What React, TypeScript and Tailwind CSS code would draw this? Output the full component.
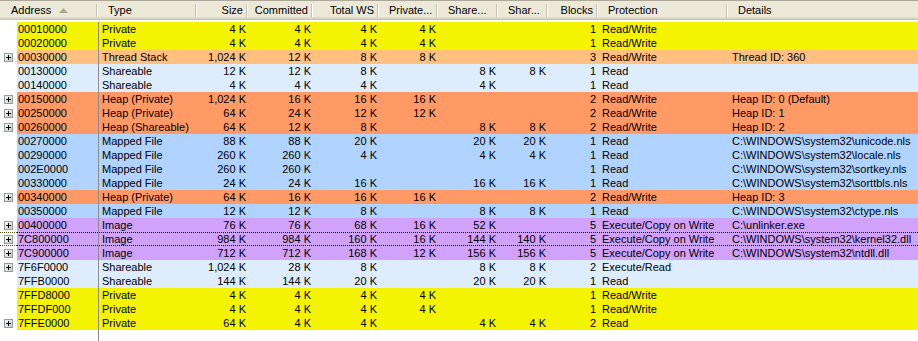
import React from "react";

type Kind = "private" | "thread" | "share" | "heap" | "mapped" | "image";

const rowBg: Record<Kind, string> = {
  private: "bg-[#f4f400]",
  thread: "bg-[#ffc080]",
  share: "bg-[#ddedfd]",
  heap: "bg-[#ff9a66]",
  mapped: "bg-[#b0d4ff]",
  image: "bg-[#d0a2fa]",
};

type Col = { label: string; w: string; right?: boolean; headLeft?: boolean };

const cols: Col[] = [
  { label: "Type", w: "w-[99px]" },
  { label: "Size", w: "w-[51px]", right: true },
  { label: "Committed", w: "w-[65px]", right: true },
  { label: "Total WS", w: "w-[66px]", right: true },
  { label: "Private...", w: "w-[59px]", right: true, headLeft: true },
  { label: "Share...", w: "w-[60px]", right: true, headLeft: true },
  { label: "Shar...", w: "w-[50px]", right: true, headLeft: true },
  { label: "Blocks", w: "w-[50px]", right: true },
  { label: "Protection", w: "w-[130px]" },
  { label: "Details", w: "flex-1" },
];

// address, expandable, kind, then the ten columns
type Row = [string, boolean, Kind, string[]];

const rows: Row[] = [
  ["00010000", false, "private", ["Private", "4 K", "4 K", "4 K", "4 K", "", "", "1", "Read/Write", ""]],
  ["00020000", false, "private", ["Private", "4 K", "4 K", "4 K", "4 K", "", "", "1", "Read/Write", ""]],
  ["00030000", true, "thread", ["Thread Stack", "1,024 K", "12 K", "8 K", "8 K", "", "", "3", "Read/Write", "Thread ID: 360"]],
  ["00130000", false, "share", ["Shareable", "12 K", "12 K", "8 K", "", "8 K", "8 K", "1", "Read", ""]],
  ["00140000", false, "share", ["Shareable", "4 K", "4 K", "4 K", "", "4 K", "", "1", "Read", ""]],
  ["00150000", true, "heap", ["Heap (Private)", "1,024 K", "16 K", "16 K", "16 K", "", "", "2", "Read/Write", "Heap ID: 0 (Default)"]],
  ["00250000", true, "heap", ["Heap (Private)", "64 K", "24 K", "12 K", "12 K", "", "", "2", "Read/Write", "Heap ID: 1"]],
  ["00260000", true, "heap", ["Heap (Shareable)", "64 K", "12 K", "8 K", "", "8 K", "8 K", "2", "Read/Write", "Heap ID: 2"]],
  ["00270000", false, "mapped", ["Mapped File", "88 K", "88 K", "20 K", "", "20 K", "20 K", "1", "Read", "C:\\WINDOWS\\system32\\unicode.nls"]],
  ["00290000", false, "mapped", ["Mapped File", "260 K", "260 K", "4 K", "", "4 K", "4 K", "1", "Read", "C:\\WINDOWS\\system32\\locale.nls"]],
  ["002E0000", false, "mapped", ["Mapped File", "260 K", "260 K", "", "", "", "", "1", "Read", "C:\\WINDOWS\\system32\\sortkey.nls"]],
  ["00330000", false, "mapped", ["Mapped File", "24 K", "24 K", "16 K", "", "16 K", "16 K", "1", "Read", "C:\\WINDOWS\\system32\\sorttbls.nls"]],
  ["00340000", true, "heap", ["Heap (Private)", "64 K", "16 K", "16 K", "16 K", "", "", "2", "Read/Write", "Heap ID: 3"]],
  ["00350000", false, "mapped", ["Mapped File", "12 K", "12 K", "8 K", "", "8 K", "8 K", "1", "Read", "C:\\WINDOWS\\system32\\ctype.nls"]],
  ["00400000", true, "image", ["Image", "76 K", "76 K", "68 K", "16 K", "52 K", "", "5", "Execute/Copy on Write", "C:\\unlinker.exe"]],
  ["7C800000", true, "image", ["Image", "984 K", "984 K", "160 K", "16 K", "144 K", "140 K", "5", "Execute/Copy on Write", "C:\\WINDOWS\\system32\\kernel32.dll"]],
  ["7C900000", true, "image", ["Image", "712 K", "712 K", "168 K", "12 K", "156 K", "156 K", "5", "Execute/Copy on Write", "C:\\WINDOWS\\system32\\ntdll.dll"]],
  ["7F6F0000", true, "share", ["Shareable", "1,024 K", "28 K", "8 K", "", "8 K", "8 K", "2", "Execute/Read", ""]],
  ["7FFB0000", false, "share", ["Shareable", "144 K", "144 K", "20 K", "", "20 K", "20 K", "1", "Read", ""]],
  ["7FFD8000", false, "private", ["Private", "4 K", "4 K", "4 K", "4 K", "", "", "1", "Read/Write", ""]],
  ["7FFDF000", false, "private", ["Private", "4 K", "4 K", "4 K", "4 K", "", "", "1", "Read/Write", ""]],
  ["7FFE0000", true, "private", ["Private", "64 K", "4 K", "4 K", "", "4 K", "4 K", "2", "Read", ""]],
];

const FOCUSED = "7C800000";

const PlusBox = () => (
  <svg width="9" height="9" viewBox="0 0 9 9">
    <defs>
      <linearGradient id="plusFill" x1="0" y1="0" x2="1" y2="1">
        <stop offset="0" stopColor="#ffffff" />
        <stop offset="1" stopColor="#c9c6b8" />
      </linearGradient>
    </defs>
    <rect x="0.5" y="0.5" width="8" height="8" fill="url(#plusFill)" stroke="#8e9aa6" />
    <path d="M2 4.5h5M4.5 2v5" stroke="#000" strokeWidth="1" />
  </svg>
);

const HeaderSep = () => (
  <span className="h-[13px] w-[2px] shrink-0 border-l border-[#c5c2b2] bg-white" />
);

const Header = () => (
  <div className="flex h-[20px] border-t border-[#aca899] bg-[#ece9d8] shadow-[inset_0_-1px_0_#cbc7b8,inset_0_-2px_0_#d6d2c2,inset_0_-3px_0_#e2decd]">
    <div className="flex w-[98px] shrink-0 items-center">
      <div className="flex flex-1 items-center pl-[11px]">
        <span>Address</span>
        <svg width="9" height="5" viewBox="0 0 9 5" className="ml-[8px]">
          <path d="M0 5L4.5 0L9 5Z" fill="#aca899" />
        </svg>
      </div>
      <HeaderSep />
    </div>
    {cols.map((c, i) => (
      <div key={c.label} className={`flex shrink-0 items-center ${c.w}`}>
        <div
          className={`flex-1 overflow-hidden whitespace-nowrap ${
            c.right && !c.headLeft ? "pr-[3px] text-right" : "pl-[10px]"
          }`}
        >
          {c.label}
        </div>
        {i < cols.length - 1 && <HeaderSep />}
      </div>
    ))}
  </div>
);

const DataRow = ({ row }: { row: Row }) => {
  const [addr, expand, kind, cells] = row;
  const focused = addr === FOCUSED;
  return (
    <div className="flex h-[14px] leading-[14px]">
      <div
        className={`flex w-[17px] shrink-0 items-center pl-[4px] ${
          focused ? "border-y border-dotted border-[#4c5a12]" : ""
        }`}
      >
        {expand && <PlusBox />}
      </div>
      <div
        className={`flex flex-1 ${rowBg[kind]} ${
          focused ? "border-y border-dotted border-black" : ""
        }`}
      >
        <div className="flex w-[81px] shrink-0 items-center pl-[1px]">{addr}</div>
        {cols.map((c, i) => (
          <div
            key={c.label}
            className={`flex shrink-0 items-center overflow-hidden whitespace-nowrap ${c.w} ${
              c.right ? "justify-end pr-[2px]" : i === 0 ? "pl-[3px]" : "pl-[4px]"
            } ${i === 0 ? "border-l border-[#8c8c8c]" : ""}`}
          >
            {cells[i]}
          </div>
        ))}
      </div>
    </div>
  );
};

export default function App() {
  return (
    <div className="flex h-[341px] w-[918px] flex-col overflow-hidden bg-white font-['Liberation_Sans',Arial,sans-serif] text-[11px] text-black">
      <Header />
      <div className="h-[2px]" />
      {rows.map((r) => (
        <DataRow key={r[0]} row={r} />
      ))}
      <div className="flex flex-1">
        <div className="w-[99px] border-r border-[#8c8c8c]" />
      </div>
    </div>
  );
}
